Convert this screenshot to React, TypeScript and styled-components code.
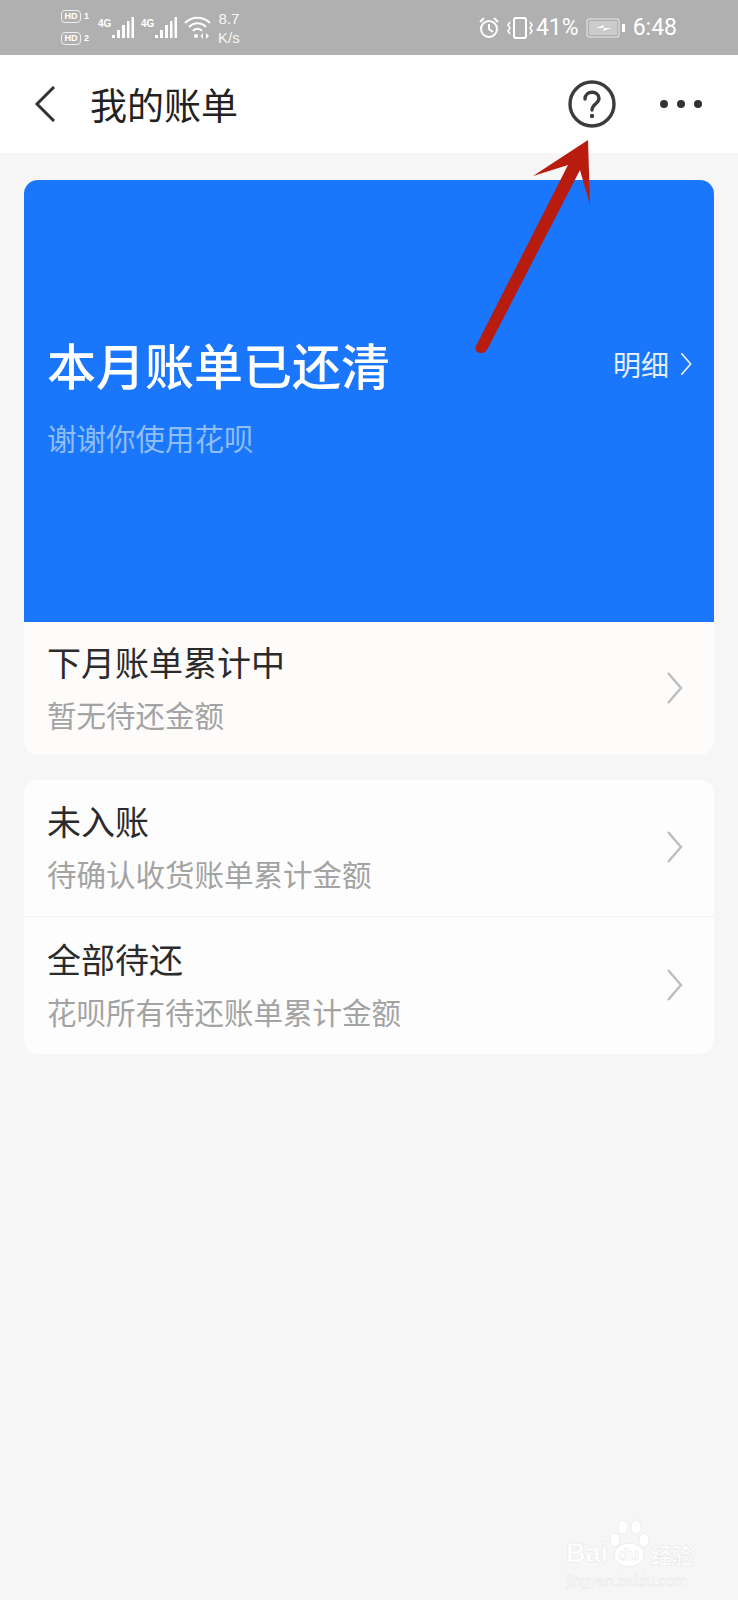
import styled, { createGlobalStyle } from 'styled-components';

const GlobalStyle = createGlobalStyle`
  html, body {
    margin: 0;
    padding: 0;
    background: #f6f6f6;
    font-family: "Noto Sans CJK SC", "Liberation Sans", sans-serif;
  }
  * {
    box-sizing: border-box;
  }
`;

const rows = {
  next: [{ title: '下月账单累计中', sub: '暂无待还金额' }],
  other: [
    { title: '未入账', sub: '待确认收货账单累计金额', first: true },
    { title: '全部待还', sub: '花呗所有待还账单累计金额', first: false },
  ],
};

function Chevron({ size = 34 }: { size?: number }) {
  return (
    <svg width={size / 2} height={size} viewBox="0 0 17 34" fill="none" stroke="currentColor" strokeWidth="2.4">
      <path d="M2 2 L15 17 L2 32" />
    </svg>
  );
}

function Bars() {
  return (
    <svg width="23" height="24" viewBox="0 0 23 24" fill="#fff">
      <rect x="1" y="19" width="3" height="3" />
      <rect x="6" y="14" width="3" height="8" />
      <rect x="11" y="9" width="3" height="13" />
      <rect x="16" y="5" width="2.500" height="17" />
      <rect x="20.500" y="1" width="2.500" height="21" />
    </svg>
  );
}

function Sim({ n }: { n: string }) {
  return (
    <SimRow>
      <HdBadge>HD</HdBadge>
      <SimNum>{n}</SimNum>
    </SimRow>
  );
}

function Row({ title, sub, divider, pad, end }: { title: string; sub: string; divider?: boolean; pad: number; end: number }) {
  return (
    <RowWrap $divider={divider} $pad={pad} $end={end}>
      <div>
        <RowTitle>{title}</RowTitle>
        <RowSub>{sub}</RowSub>
      </div>
      <RowChevron>
        <Chevron />
      </RowChevron>
    </RowWrap>
  );
}

export default function App() {
  return (
    <Page>
      <GlobalStyle />
      <StatusBar>
        <StatusLeft>
          <SimStack>
            <Sim n="1" />
            <Sim n="2" />
          </SimStack>
          <Signal>
            <NetLabel>4G</NetLabel>
            <Bars />
          </Signal>
          <Signal>
            <NetLabel>4G</NetLabel>
            <Bars />
          </Signal>
          <svg width="27" height="24" viewBox="0 0 27 24" fill="none" stroke="#fff" strokeWidth="2">
            <path d="M1 7 C8 0 19 0 26 7" />
            <path d="M5 11 C10 6 17 6 22 11" />
            <path d="M9 15 C11 12 16 12 18 15" />
            <circle cx="12" cy="20" r="2" fill="#fff" stroke="none" />
            <path d="M19 17 L19 23 L16.500 20 Z M22 17 L22 23 L25 20 Z" fill="#fff" stroke="none" />
          </svg>
          <Speed>
            <span>8.7</span>
            <span>K/s</span>
          </Speed>
        </StatusLeft>
        <StatusRight>
          <svg width="20" height="22" viewBox="0 0 20 22" fill="none" stroke="#fff" strokeWidth="2">
            <circle cx="10" cy="12" r="8" />
            <path d="M10 7 L10 12 L14 15" />
            <path d="M1 5 L5 1 M19 5 L15 1" />
          </svg>
          <VibrateIcon width="28" height="24" viewBox="0 0 28 24" fill="none" stroke="#fff" strokeWidth="2">
            <rect x="8" y="2" width="12" height="20" rx="2" />
            <path d="M4 6 L2 9 L4 12 L2 15 L4 18 M24 6 L26 9 L24 12 L26 15 L24 18" strokeWidth="1.600" />
          </VibrateIcon>
          <StatusText>41%</StatusText>
          <svg width="40" height="20" viewBox="0 0 40 20" fill="none">
            <rect x="1" y="1" width="32" height="18" rx="2" stroke="#fff" strokeOpacity="0.7" />
            <rect x="3" y="3" width="28" height="14" fill="#fff" fillOpacity="0.35" />
            <rect x="36" y="6" width="3" height="8" fill="#fff" />
            <path d="M10 10 L18 7 L17 10 L25 10 L17 13 L18 10 Z" fill="#fff" />
          </svg>
          <StatusText>6:48</StatusText>
        </StatusRight>
      </StatusBar>

      <NavBar>
        <NavLeft>
          <svg width="22" height="36" viewBox="0 0 22 36" fill="none" stroke="#333" strokeWidth="3">
            <path d="M20 1 L3 18 L20 35" />
          </svg>
          <NavTitle>我的账单</NavTitle>
        </NavLeft>
        <NavRight>
          <svg width="48" height="48" viewBox="0 0 48 48" fill="none" stroke="#3c3c3c" strokeWidth="3.400">
            <circle cx="24" cy="24" r="22" />
            <path d="M17 19 C17 10 31 10 31 18.500 C31 23.500 24 24 24 30" strokeLinecap="round" />
            <circle cx="24" cy="36" r="2.200" fill="#3c3c3c" stroke="none" />
          </svg>
          <Dots>
            <Dot />
            <Dot />
            <Dot />
          </Dots>
        </NavRight>
      </NavBar>

      <Content>
        <Card $tone="#fefcfb">
          <Hero>
            <HeroTop>
              <HeroTitle>本月账单已还清</HeroTitle>
              <DetailLink>
                明细
                <Chevron size={24} />
              </DetailLink>
            </HeroTop>
            <HeroSub>谢谢你使用花呗</HeroSub>
          </Hero>
          {rows.next.map(r => (
            <Row key={r.title} title={r.title} sub={r.sub} pad={20} end={23} />
          ))}
        </Card>

        <Card $tone="#fdfdfd">
          {rows.other.map(r => (
            <Row key={r.title} title={r.title} sub={r.sub} divider={!r.first} pad={r.first ? 21 : 22} end={25} />
          ))}
        </Card>
      </Content>

      <RedArrow width="120" height="225" viewBox="0 0 120 225">
        <path
          d="M113 5 L58 41 L93 30 L1 211 Q-1 217 5 218 Q10 219 13 213 L105 35 L115 70 Z"
          fill="#b71c0f"
        />
      </RedArrow>

      <Watermark>
        <WatermarkTop>
          <BrandText>Bai</BrandText>
          <PawBox>
            <svg width="42" height="50" viewBox="0 0 42 50" fill="#fff" stroke="#ececec">
              <ellipse cx="7" cy="22" rx="5" ry="7" />
              <ellipse cx="15" cy="9" rx="5" ry="7" />
              <ellipse cx="28" cy="9" rx="5" ry="7" />
              <ellipse cx="36" cy="22" rx="5" ry="7" />
              <ellipse cx="21" cy="37" rx="15" ry="12" />
            </svg>
            <PawText>du</PawText>
          </PawBox>
          <BrandCn>经验</BrandCn>
        </WatermarkTop>
        <WatermarkUrl>jingyan.baidu.com</WatermarkUrl>
      </Watermark>
    </Page>
  );
}

const Page = styled.div`
  position: relative;
  width: 738px;
  height: 1600px;
  overflow: hidden;
  background: #f6f6f6;
`;

const StatusBar = styled.div`
  height: 55px;
  background: #b0b0b0;
  color: #fff;
  display: flex;
  align-items: center;
  justify-content: space-between;
  padding: 0 61px;
`;

const StatusLeft = styled.div`
  display: flex;
  align-items: center;
  gap: 7px;
`;

const StatusRight = styled.div`
  display: flex;
  align-items: center;
  gap: 7px;
`;

const VibrateIcon = styled.svg`
  margin-right: -5px;
`;

const SimStack = styled.div`
  display: flex;
  flex-direction: column;
  gap: 9px;
  margin-right: 2px;
`;

const SimRow = styled.div`
  display: flex;
  align-items: center;
  gap: 3px;
`;

const HdBadge = styled.span`
  width: 20px;
  height: 13px;
  border-radius: 4px;
  border: 1.5px solid #eee;
  color: #fff;
  font: 700 9px/10px "Liberation Sans", sans-serif;
  text-align: center;
`;

const SimNum = styled.span`
  font: 700 9px/11px "Liberation Sans", sans-serif;
  color: #fff;
`;

const Signal = styled.div`
  display: flex;
  align-items: flex-start;
  gap: 0;
`;

const NetLabel = styled.span`
  font: 700 10px/12px "Liberation Sans", sans-serif;
  margin-top: 2px;
  width: 13px;
`;

const Speed = styled.div`
  display: flex;
  flex-direction: column;
  font: 400 15px/19px "Liberation Sans", sans-serif;
  align-items: center;
  opacity: 0.9;
`;

const StatusText = styled.span`
  font: 400 23px/28px "Roboto", "Liberation Sans", sans-serif;
  color: #fff;
`;

const NavBar = styled.div`
  height: 98px;
  background: #fff;
  display: flex;
  align-items: center;
  justify-content: space-between;
  padding: 0 36px 0 34px;
`;

const NavLeft = styled.div`
  display: flex;
  align-items: center;
  gap: 34px;
`;

const NavTitle = styled.h1`
  margin: 0;
  font-size: 37px;
  line-height: 48px;
  font-weight: 400;
  color: #222;
`;

const NavRight = styled.div`
  display: flex;
  align-items: center;
  gap: 44px;
`;

const Dots = styled.div`
  display: flex;
  gap: 9px;
`;

const Dot = styled.span`
  width: 8px;
  height: 8px;
  border-radius: 50%;
  background: #333;
`;

const Content = styled.div`
  padding: 27px 24px 0;
  display: flex;
  flex-direction: column;
  gap: 25px;
`;

const Card = styled.div<{ $tone: string }>`
  background: ${props => props.$tone};
  border-radius: 14px;
  overflow: hidden;
`;

const Hero = styled.div`
  height: 442px;
  background: #1a76fa;
  padding: 154px 22px 0 23px;
`;

const HeroTop = styled.div`
  display: flex;
  align-items: center;
  justify-content: space-between;
`;

const HeroTitle = styled.div`
  font-size: 49px;
  line-height: 60px;
  font-weight: 500;
  color: #fff;
`;

const DetailLink = styled.div`
  display: flex;
  align-items: center;
  gap: 11px;
  font-size: 28px;
  line-height: 40px;
  color: #e4eefc;
`;

const HeroSub = styled.div`
  margin-top: 23px;
  font-size: 29.5px;
  line-height: 40px;
  color: #8fbdf6;
`;

const RowWrap = styled.div<{ $divider?: boolean; $pad: number; $end: number }>`
  display: flex;
  align-items: center;
  justify-content: space-between;
  padding: ${props => props.$pad}px 31px ${props => props.$end}px 23px;
  border-top: ${props => (props.$divider ? '1px solid #f1f1f1' : 'none')};
`;

const RowTitle = styled.div`
  font-size: 34px;
  line-height: 40px;
  color: #2b2b2b;
`;

const RowSub = styled.div`
  margin-top: 14px;
  font-size: 29.5px;
  line-height: 36px;
  color: #a3a3a3;
`;

const RowChevron = styled.div`
  display: flex;
  margin-top: 2px;
  color: #bdbdbd;
`;

const RedArrow = styled.svg`
  position: absolute;
  left: 475px;
  top: 135px;
`;

const Watermark = styled.div`
  position: absolute;
  left: 566px;
  top: 1518px;
  width: 136px;
  color: #fff;
  -webkit-text-stroke: 0.5px #e6e6e6;
`;

const WatermarkTop = styled.div`
  display: flex;
  align-items: flex-end;
`;

const BrandText = styled.span`
  font: 700 27px/30px "Liberation Sans", sans-serif;
`;

const PawBox = styled.div`
  position: relative;
  width: 42px;
  height: 50px;
`;

const PawText = styled.span`
  position: absolute;
  left: 10px;
  bottom: 3px;
  font: 700 17px/20px "Liberation Sans", sans-serif;
`;

const BrandCn = styled.span`
  font-size: 21px;
  line-height: 28px;
  font-weight: 700;
  margin-left: 1px;
`;

const WatermarkUrl = styled.div`
  margin-top: 4px;
  font: 400 15px/18px "Liberation Sans", sans-serif;
  white-space: nowrap;
`;
